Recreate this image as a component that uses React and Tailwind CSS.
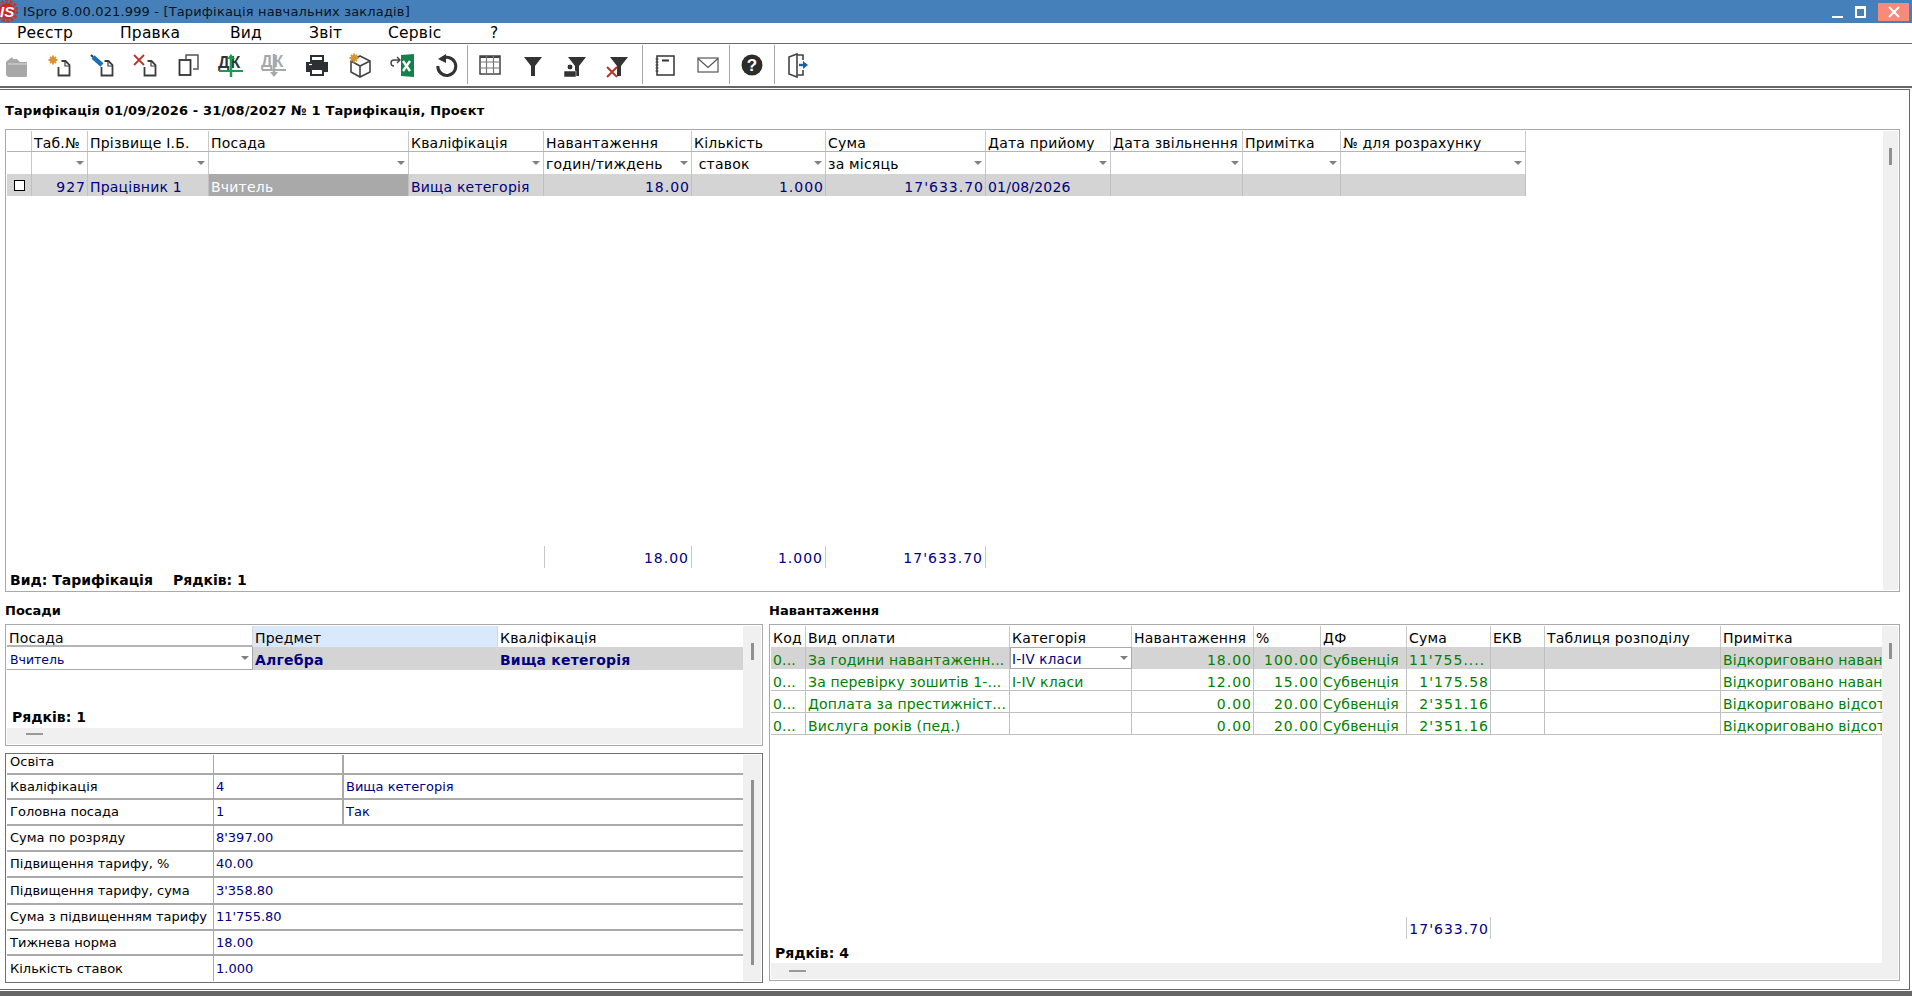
import React from 'react';

const Asterisk = ({ x = 9, y = 10 }) => (
  <g stroke="#d9922e" strokeWidth="1.9">
    <path d={`M${x - 4.500} ${y}h9M${x} ${y - 4.500}v9M${x - 3} ${y - 3}l6 6M${x + 3} ${y - 3}l-6 6`} />
  </g>
);

const Doc = () => (
  <g fill="none" stroke="#3c3c3c" strokeWidth="1.8">
    <path d="M14.500 17v8.500h11V15l-4-4h-4" />
    <path d="M21 11v5h4.500" strokeWidth="1.200" />
  </g>
);

const Svg = ({ children }) => (
  <svg width="30" height="30" viewBox="0 0 30 30">{children}</svg>
);

const Funnel = ({ x = 0, fill = '#333' }) => (
  <path d={`M${x + 6} 7h18l-7 9v10h-4V16z`} fill={fill} />
);

const icons = {
  folder: (
    <Svg>
      <path d="M6 11l5-4 1 2h4l3 3h7v14l-1 1H7l-2-2V12z" fill="#a8a8a8" />
      <path d="M7 14h19" stroke="#dcdcdc" strokeWidth="1" />
    </Svg>
  ),
  create: <Svg><Asterisk /><Doc /></Svg>,
  edit: (
    <Svg>
      <path d="M6 7l9 8" stroke="#1d6fb8" strokeWidth="4.500" />
      <path d="M4 5l2 2" stroke="#333" strokeWidth="2" />
      <Doc />
    </Svg>
  ),
  remove: (
    <Svg>
      <path d="M4 5l10 10M14 5L4 15" stroke="#b8352a" strokeWidth="1.800" />
      <Doc />
    </Svg>
  ),
  copy: (
    <Svg>
      <path d="M13 9V5h12v14h-5" fill="none" stroke="#555" strokeWidth="1.500" />
      <rect x="6.500" y="10" width="11" height="15" fill="none" stroke="#333" strokeWidth="1.800" />
    </Svg>
  ),
  dkUp: (
    <Svg>
      <text x="2" y="18" fontFamily="Liberation Sans" fontWeight="700" fontSize="16" fill="#333" letterSpacing="1">ДК</text>
      <path d="M3 21h24" stroke="#1d9a50" strokeWidth="2" />
      <path d="M15 27V7" stroke="#1d9a50" strokeWidth="2.500" />
      <path d="M11 9l4-5 4 5z" fill="#1d9a50" />
    </Svg>
  ),
  dkDown: (
    <Svg>
      <text x="2" y="17" fontFamily="Liberation Sans" fontWeight="700" fontSize="16" fill="#a8a8a8" letterSpacing="1">ДК</text>
      <path d="M3 20h24" stroke="#a8a8a8" strokeWidth="2" />
      <path d="M15 4v20" stroke="#a8a8a8" strokeWidth="2.500" />
      <path d="M11 22l4 5 4-5z" fill="#a8a8a8" />
    </Svg>
  ),
  print: (
    <Svg>
      <path d="M9 6h12v5H9z" fill="none" stroke="#2c2f33" strokeWidth="2" />
      <path d="M4 12h22v10h-4v-4H8v4H4z" fill="#2c2f33" />
      <path d="M9 19h12v6H9z" fill="none" stroke="#2c2f33" strokeWidth="2" />
      <path d="M7 14.500h3" stroke="#fff" strokeWidth="1.200" />
    </Svg>
  ),
  box: (
    <Svg>
      <path d="M15 6l10 5v11l-10 5-9-5V11zM6 11l9 5 10-5M15 16v11" fill="none" stroke="#444" strokeWidth="1.600" />
      <Asterisk x={9} y={8} />
    </Svg>
  ),
  excel: (
    <Svg>
      <path d="M13 5l13-1v23l-13-1z" fill="#14804a" />
      <path d="M15 11l7 10M22 11l-7 10" stroke="#fff" strokeWidth="2.400" />
      <path d="M11 10H6a3 3 0 0 0 0 6M9 7l3 3-3 3" fill="none" stroke="#444" strokeWidth="1.400" />
    </Svg>
  ),
  undo: (
    <Svg>
      <path d="M10 9.500a9 9 0 1 1-3.200 6.500" fill="none" stroke="#333" strokeWidth="3" />
      <path d="M15 4v9l-8-4z" fill="#333" />
    </Svg>
  ),
  grid: (
    <Svg>
      <rect x="5" y="6" width="20" height="18" fill="none" stroke="#444" strokeWidth="1.500" />
      <path d="M5 7h20" stroke="#444" strokeWidth="2" />
      <path d="M5 12h20M5 18h20M11.500 6v18M18.500 6v18" stroke="#777" strokeWidth="1.200" />
    </Svg>
  ),
  filter: <Svg><Funnel /></Svg>,
  filterUser: (
    <Svg>
      <Funnel x={2} />
      <circle cx="10" cy="17" r="3" fill="#333" stroke="#fff" />
      <path d="M4 27v-6h12v6z" fill="#333" stroke="#fff" strokeWidth=".5" />
    </Svg>
  ),
  filterX: (
    <Svg>
      <Funnel x={2} />
      <path d="M5 17l10 10M15 17L5 27" stroke="#b8352a" strokeWidth="2" />
    </Svg>
  ),
  note: (
    <Svg>
      <rect x="7" y="6" width="17" height="19" fill="none" stroke="#333" strokeWidth="1.500" />
      <path d="M12 10.500h7" stroke="#333" strokeWidth="2" />
      <path d="M5.500 9h3M5.500 12h3M5.500 15h3M5.500 18h3M5.500 21h3" stroke="#333" strokeWidth="1" />
    </Svg>
  ),
  mail: (
    <Svg>
      <rect x="5" y="8" width="20" height="14" fill="none" stroke="#555" strokeWidth="1.200" />
      <path d="M5 8.500l10 9 10-9" fill="none" stroke="#555" strokeWidth="1.200" />
    </Svg>
  ),
  help: (
    <Svg>
      <circle cx="15" cy="15" r="10.500" fill="#2c2c2c" />
      <text x="15" y="21" textAnchor="middle" fontFamily="Liberation Sans" fontWeight="700" fontSize="17" fill="#fff">?</text>
    </Svg>
  ),
  exit: (
    <Svg>
      <path d="M7 7l8-3v23l-8-3z" fill="#fff" stroke="#444" strokeWidth="1.600" />
      <path d="M15 5h6v5M21 20v5h-6" fill="none" stroke="#444" strokeWidth="1.600" />
      <path d="M17 15h5" stroke="#1a5fa8" strokeWidth="2.400" />
      <path d="M21 11l5 4-5 4z" fill="#1a5fa8" />
    </Svg>
  ),
};

const tools = [
  ['folder', 32, 5], ['create', 43], ['edit', 43], ['remove', 43], ['copy', 43], ['dkUp', 43], ['dkDown', 43],
  ['print', 43], ['box', 43], ['excel', 43], ['undo', 43], 'sep',
  ['grid', 43], ['filter', 43], ['filterUser', 42], ['filterX', 42, 4], 'sep2',
  ['note', 43], ['mail', 43], 'sep3', ['help', 44], 'sep4', ['exit', 44],
];

const Caret = () => (
  <span className="ml-auto mr-[3px] h-0 w-0 border-x-[4px] border-t-[4px] border-x-transparent border-t-[#808080]" />
);

const Thumb = ({ className }) => <div className={`mx-auto w-[3px] bg-[#909090] ${className}`} />;

const Num = ({ children }) => <span className="tracking-[1px]">{children}</span>;

const topCols = 'grid-cols-[25px_56px_121px_200px_135px_148px_134px_160px_125px_132px_98px_185px]';
const topHead = ['', 'Таб.№', 'Прізвище І.Б.', 'Посада', 'Кваліфікація', 'Навантаження', 'Кількість', 'Сума', 'Дата прийому', 'Дата звільнення', 'Примітка', '№ для розрахунку'];
const topSub = ['', '', '', '', '', 'годин/тиждень', ' ставок', 'за місяць', '', '', '', ''];

function TopTable() {
  return (
    <div className="w-[1519px]">
      <div className={`grid h-[21px] grid-rows-1 ${topCols} border-b border-[#b4b4b4]`}>
        {topHead.map((h, i) => (
          <div key={i} className="overflow-hidden whitespace-nowrap border-r border-[#c8c8c8] pl-[2px] leading-[24px] text-black">{h}</div>
        ))}
      </div>
      <div className={`grid h-[22px] grid-rows-1 ${topCols}`}>
        {topSub.map((h, i) => (
          <div key={i} className="flex items-center border-r border-[#c8c8c8] pl-[2px] text-black">
            <span className="whitespace-pre pt-[3px]">{h}</span>
            {i > 0 && <Caret />}
          </div>
        ))}
      </div>
      <div className={`grid h-[22px] grid-rows-1 ${topCols} bg-[#d4d4d4] leading-[26px] tracking-[0.2px] text-[#000080]`}>
        <div className="flex items-center justify-center border-r border-[#c0c0c0]">
          <span className="h-[11px] w-[11px] border border-black bg-white" />
        </div>
        <div className="border-r border-[#c0c0c0] pr-px text-right"><Num>927</Num></div>
        <div className="whitespace-nowrap border-r border-[#c0c0c0] pl-[2px]">Працівник 1</div>
        <div className="border-r border-[#c0c0c0] bg-[#a9a9a9] pl-[2px] text-white">Вчитель</div>
        <div className="whitespace-nowrap border-r border-[#c0c0c0] pl-[2px]">Вища кетегорія</div>
        <div className="border-r border-[#c0c0c0] pr-px text-right"><Num>18.00</Num></div>
        <div className="border-r border-[#c0c0c0] pr-px text-right"><Num>1.000</Num></div>
        <div className="border-r border-[#c0c0c0] pr-px text-right"><Num>17'633.70</Num></div>
        <div className="whitespace-nowrap border-r border-[#c0c0c0] pl-[2px]">01/08/2026</div>
        <div className="border-r border-[#c0c0c0]" />
        <div className="border-r border-[#c0c0c0]" />
        <div className="border-r border-[#c0c0c0]" />
      </div>
    </div>
  );
}

function TopPanel() {
  return (
    <div className="flex h-[463px] w-[1895px] border border-[#a9a9a9] p-px">
      <div className="flex w-[1876px] flex-col">
        <div className="flex-1">
          <TopTable />
        </div>
        <div className="flex h-[22px] pl-[537px] leading-[25px] text-[#000080]">
          <div className="w-[148px] border-x border-[#c8c8c8] pr-[2px] text-right"><Num>18.00</Num></div>
          <div className="w-[134px] border-r border-[#c8c8c8] pr-[2px] text-right"><Num>1.000</Num></div>
          <div className="w-[160px] border-r border-[#c8c8c8] pr-[2px] text-right"><Num>17'633.70</Num></div>
        </div>
        <div className="flex h-[22px] items-center gap-5 pl-[3px] pt-[2px] font-bold tracking-normal text-black">
          <span>Вид: Тарифікація</span>
          <span>Рядків: 1</span>
        </div>
      </div>
      <div className="flex-1 bg-[#f0f0f0] pt-[17px]">
        <Thumb className="h-[17px]" />
      </div>
    </div>
  );
}

function PositionPanel() {
  const cell = 'border-r border-[#d8d8d8] pl-[2px]';
  return (
    <div className="flex h-[122px] flex-col border border-[#a9a9a9] p-px">
      <div className="flex h-[102px]">
        <div className="w-[736px]">
          <div className="grid h-[21px] grid-cols-[246px_245px_245px] grid-rows-1 leading-[25px] text-black">
            <div className={`${cell} border-b-2 border-b-[#b4b4b4]`}>Посада</div>
            <div className={`${cell} bg-[#d9e9fb]`}>Предмет</div>
            <div className="pl-[2px]">Кваліфікація</div>
          </div>
          <div className="grid h-[23px] grid-cols-[246px_245px_245px] grid-rows-1 text-[#000080]">
            <div className="flex items-center border-b border-r border-[#a9a9a9] bg-white pl-[3px] text-[12.500px] tracking-normal">
              <span className="pt-[5px]">Вчитель</span>
              <Caret />
            </div>
            <div className={`${cell} bg-[#d4d4d4] font-bold leading-[27px]`}>Алгебра</div>
            <div className="bg-[#d4d4d4] pl-[2px] font-bold leading-[27px]">Вища кетегорія</div>
          </div>
          <div className="pl-[5px] pt-[37px] font-bold tracking-normal text-black">Рядків: 1</div>
        </div>
        <div className="flex-1 bg-[#f0f0f0] pt-[17px]">
          <Thumb className="h-[17px]" />
        </div>
      </div>
      <div className="flex-1 bg-[#f0f0f0] pl-[19px] pt-[5px]">
        <div className="h-[2px] w-[17px] bg-[#999]" />
      </div>
    </div>
  );
}

const details = [
  ['Освіта', '', '', 20],
  ['Кваліфікація', '4', 'Вища кетегорія', 25],
  ['Головна посада', '1', 'Так', 26],
  ['Сума по розряду', "8'397.00", null, 26],
  ['Підвищення тарифу, %', '40.00', null, 26],
  ['Підвищення тарифу, сума', "3'358.80", null, 27],
  ['Сума з підвищенням тарифу', "11'755.80", null, 26],
  ['Тижнева норма', '18.00', null, 25],
  ['Кількість ставок', '1.000', null, 25],
];

function DetailPanel() {
  return (
    <div className="mt-[7px] flex h-[230px] border border-[#707070] p-px text-[13px] tracking-normal">
      <div className="w-[736px]">
        {details.map(([label, a, b, h], i) => (
          <div
            key={label}
            style={{ height: h }}
            className={`flex ${i < 8 ? 'border-b-2 border-[#a9a9a9]' : ''}`}
          >
            <div className={`w-[207px] shrink-0 whitespace-nowrap border-r border-[#a9a9a9] pl-[3px] text-black ${i === 0 ? 'leading-[14px]' : 'flex items-center'}`}>
              {label}
            </div>
            <div className={`flex items-center pl-[2px] text-[#000080] ${b === null ? 'flex-1' : 'w-[130px] border-r-2 border-[#a9a9a9]'}`}>
              {a}
            </div>
            {b !== null && <div className="flex flex-1 items-center pl-[2px] text-[#000080]">{b}</div>}
          </div>
        ))}
      </div>
      <div className="flex-1 bg-[#f0f0f0] pt-[25px]">
        <Thumb className="h-[185px]" />
      </div>
    </div>
  );
}

const loadCols = 'grid-cols-[35px_204px_122px_122px_67px_86px_84px_54px_176px_161px]';
const loadHead = ['Код', 'Вид оплати', 'Категорія', 'Навантаження', '%', 'ДФ', 'Сума', 'ЕКВ', 'Таблиця розподілу', 'Примітка'];
const loadRows = [
  ['0...', 'За години навантаженн...', null, '18.00', '100.00', 'Субвенція', "11'755....", 'Відкориговано навантаження'],
  ['0...', 'За перевірку зошитів 1-...', 'І-ІV класи', '12.00', '15.00', 'Субвенція', "1'175.58", 'Відкориговано навантаження'],
  ['0...', 'Доплата за престижніст...', '', '0.00', '20.00', 'Субвенція', "2'351.16", 'Відкориговано відсоток'],
  ['0...', 'Вислуга років (пед.)', '', '0.00', '20.00', 'Субвенція', "2'351.16", 'Відкориговано відсоток'],
];

function LoadPanel() {
  const c = 'border-r border-[#c0c0c0] pl-[2px] overflow-hidden whitespace-nowrap';
  const r = 'border-r border-[#c0c0c0] pr-px text-right';
  return (
    <div className="flex h-[357px] flex-col border border-[#a9a9a9] p-px">
      <div className="flex h-[337px]">
        <div className="flex w-[1111px] flex-col">
          <div className={`grid h-[21px] shrink-0 grid-rows-1 ${loadCols} leading-[25px] text-black`}>
            {loadHead.map((h) => (
              <div key={h} className="whitespace-nowrap border-r border-[#c8c8c8] pl-[2px] last:border-r-0">{h}</div>
            ))}
          </div>
          {loadRows.map((row, i) => (
            <div
              key={row[1]}
              className={`grid h-[22px] shrink-0 grid-rows-1 ${loadCols} leading-[26px] tracking-[0.15px] text-[#008000] ${i === 0 ? 'bg-[#d4d4d4]' : 'border-b border-[#c0c0c0]'}`}
            >
              <div className={c}>{row[0]}</div>
              <div className={c}>{row[1]}</div>
              {row[2] === null ? (
                <div className="flex items-center border border-[#a9a9a9] bg-white pl-px text-[13.500px] tracking-[0.2px] text-[#000080]">
                  <span className="pt-[2px]">І-ІV класи</span>
                  <Caret />
                </div>
              ) : (
                <div className={c}>{row[2]}</div>
              )}
              <div className={r}><Num>{row[3]}</Num></div>
              <div className={r}><Num>{row[4]}</Num></div>
              <div className={c}>{row[5]}</div>
              <div className={i === 0 ? c : r}><Num>{row[6]}</Num></div>
              <div className={c} />
              <div className={c} />
              <div className="overflow-hidden whitespace-nowrap pl-[2px]">{row[7]}</div>
            </div>
          ))}
          <div className="flex-1" />
          <div className="flex h-[22px] shrink-0 pl-[635px] leading-[25px] text-[#000080]">
            <div className="w-[85px] whitespace-nowrap border-x border-[#c8c8c8] pr-px text-right"><Num>17'633.70</Num></div>
          </div>
          <div className="flex h-[24px] shrink-0 items-center pl-[4px] pt-[4px] font-bold tracking-normal text-black">Рядків: 4</div>
        </div>
        <div className="flex-1 bg-[#f0f0f0] pt-[17px]">
          <Thumb className="h-[16px]" />
        </div>
      </div>
      <div className="flex-1 bg-[#f0f0f0] pl-[18px] pt-[7px]">
        <div className="h-[2px] w-[17px] bg-[#999]" />
      </div>
    </div>
  );
}

export default function App() {
  return (
    <div className="flex h-[996px] w-[1912px] flex-col overflow-hidden bg-white font-['DejaVu_Sans',sans-serif] text-[13px]">
      <div className="flex h-[23px] items-center bg-[#4680bb] text-[13px] text-[#0a1520]">
        <svg width="20" height="23" viewBox="0 0 20 23" className="-ml-[2px]">
          <circle cx="9" cy="11" r="10" fill="none" stroke="#c0392b" strokeWidth="3" strokeDasharray="3 1.500" />
          <circle cx="9" cy="11" r="8" fill="#c62828" />
          <text x="2" y="17" fontFamily="Liberation Sans" fontStyle="italic" fontWeight="700" fontSize="15" fill="#fff">IS</text>
        </svg>
        <span className="ml-[5px] tracking-[0.15px]">ISpro 8.00.021.999 - [Тарифікація навчальних закладів]</span>
        <div className="ml-auto flex items-center">
          <span className="mt-[11px] h-[2px] w-[11px] bg-white" />
          <span className="ml-[12px] h-[12px] w-[11px] border-2 border-t-[3px] border-white" />
          <span className="ml-[12px] mr-[3px] flex h-[18px] w-[31px] items-center justify-center bg-[#f88a7a]">
            <svg width="12" height="12" viewBox="0 0 12 12">
              <path d="M1 1l10 10M11 1L1 11" stroke="#fff" strokeWidth="2" />
            </svg>
          </span>
        </div>
      </div>

      <div className="flex h-[21px] items-center border-b border-[#6b6b6b] pt-[2px] text-[15.500px] tracking-[0.2px] text-black">
        <span className="ml-[17px] w-[103px]">Реєстр</span>
        <span className="w-[110px]">Правка</span>
        <span className="w-[79px]">Вид</span>
        <span className="w-[79px]">Звіт</span>
        <span className="w-[102px]">Сервіс</span>
        <span>?</span>
      </div>

      <div className="flex h-[42px] shrink-0 items-center pb-px">
        {tools.map((t, i) =>
          typeof t === 'string' ? (
            <div key={i} className="h-[39px] w-px bg-[#a8a8a8]" />
          ) : (
            <div key={t[0]} className="flex shrink-0 justify-center" style={{ width: t[1], marginRight: t[2] ?? 0 }}>
              {icons[t[0]]}
            </div>
          )
        )}
      </div>

      <div className="h-[3px] shrink-0 border-t-2 border-[#666]" />

      <div className="flex h-[901px] w-[1910px] shrink-0 flex-col border-b border-r border-t border-[#666] pl-[5px] text-[14px] tracking-[0.2px]">
        <div className="flex h-[39px] items-center pt-[3px] text-[13px] font-bold tracking-[0.15px] text-black">
          <span>Тарифікація 01/09/2026 - 31/08/2027 № 1 Тарифікація, Проєкт</span>
        </div>
        <TopPanel />
        <div className="flex gap-[6px]">
          <div className="w-[758px]">
            <div className="flex h-[32px] items-center pt-[5px] text-[13px] font-bold tracking-normal text-black">
              <span>Посади</span>
            </div>
            <PositionPanel />
            <DetailPanel />
          </div>
          <div className="w-[1131px]">
            <div className="flex h-[32px] items-center pt-[5px] text-[13px] font-bold tracking-normal text-black">
              <span>Навантаження</span>
            </div>
            <LoadPanel />
          </div>
        </div>
      </div>
      <div className="mt-px flex-1 bg-[#666]" />
    </div>
  );
}
